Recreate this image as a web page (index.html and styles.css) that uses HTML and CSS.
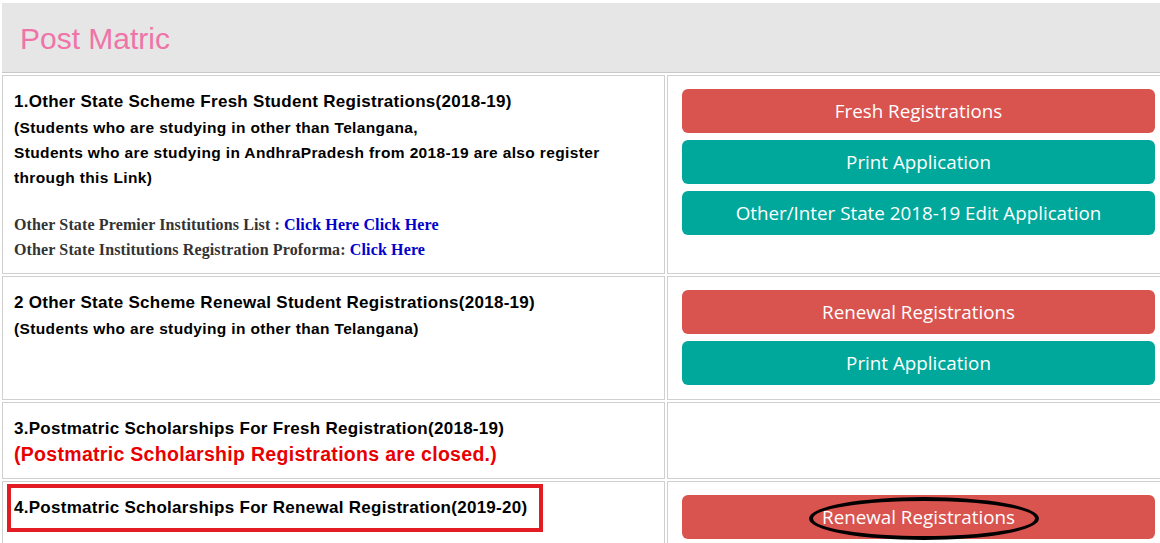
FILE: index.html
```html
<!DOCTYPE html>
<html lang="en">
<head>
  <meta charset="UTF-8">
  <title>Post Matric</title>
  <link rel="stylesheet" href="styles.css">
</head>
<body>

  <div class="panel">
    <!-- heading -->
    <div class="panel-head">
      <h3>Post Matric</h3>
    </div>

    <!-- 1. fresh, other state -->
    <div class="row">
      <div class="cell info">
        <div class="title">1.Other State Scheme Fresh Student Registrations(2018-19)</div>
        <div class="sub">(Students who are studying in other than Telangana,</div>
        <div class="sub">Students who are studying in AndhraPradesh from 2018-19 are also register through this Link)</div>
        <div class="links">
          <div>Other State Premier Institutions List : <a href="#">Click Here</a> <a href="#">Click Here</a></div>
          <div>Other State Institutions Registration Proforma: <a href="#">Click Here</a></div>
        </div>
      </div>
      <div class="cell actions">
        <a class="btn btn-red" href="#">Fresh Registrations</a>
        <a class="btn btn-teal" href="#">Print Application</a>
        <a class="btn btn-teal" href="#">Other/Inter State 2018-19 Edit Application</a>
      </div>
    </div>

    <!-- 2. renewal, other state -->
    <div class="row">
      <div class="cell info">
        <div class="title">2 Other State Scheme Renewal Student Registrations(2018-19)</div>
        <div class="sub">(Students who are studying in other than Telangana)</div>
      </div>
      <div class="cell actions">
        <a class="btn btn-red" href="#">Renewal Registrations</a>
        <a class="btn btn-teal" href="#">Print Application</a>
      </div>
    </div>

    <!-- 3. fresh, closed -->
    <div class="row">
      <div class="cell info">
        <div class="title">3.Postmatric Scholarships For Fresh Registration(2018-19)</div>
        <div class="closed">(Postmatric Scholarship Registrations are closed.)</div>
      </div>
      <div class="cell actions"></div>
    </div>

    <!-- 4. renewal -->
    <div class="row">
      <div class="cell info boxed">
        <div class="mark">
          <div class="title">4.Postmatric Scholarships For Renewal Registration(2019-20)</div>
        </div>
      </div>
      <div class="cell actions">
        <a class="btn btn-red" href="#">Renewal Registrations
          <span class="ring"></span>
        </a>
      </div>
    </div>
  </div>

</body>
</html>
```

FILE: styles.css
```css
body {
  margin: 0;
  overflow: hidden;
  background: #fff;
  font-family: 'Liberation Sans', Arial, sans-serif;
  color: #000;
}

.panel {
  width: 1168px;
  padding: 3px 2px 2px;
  display: flex;
  flex-direction: column;
  gap: 2px;
}

.panel-head {
  background: #e6e6e6;
  border-bottom: 1px solid #c8c8c8;
  height: 69px;
  display: flex;
  align-items: center;
  padding-left: 18px;
}

.panel-head h3 {
  margin: 2px 0 0;
  font-weight: normal;
  font-size: 30px;
  color: #ef74a8;
}

.row {
  display: grid;
  grid-template-columns: 663px 1fr;
  gap: 2px;
}

.cell {
  border: 1px solid #d0d0d0;
}

.info {
  padding: 13px 11px 11px 11px;
}

.title {
  font-weight: bold;
  font-size: 17px;
  letter-spacing: 0.28px;
  line-height: 26px;
}

.sub {
  font-weight: bold;
  font-size: 15.5px;
  letter-spacing: 0.36px;
  line-height: 25px;
}

.closed {
  font-weight: bold;
  font-size: 19.5px;
  letter-spacing: 0.3px;
  line-height: 25px;
  color: #e80000;
}

.links {
  margin-top: 22px;
  font-family: 'Liberation Serif', 'Times New Roman', serif;
  font-weight: bold;
  font-size: 16px;
  letter-spacing: 0.13px;
  line-height: 25px;
  color: #333;
}

.links a {
  color: #0000cc;
  text-decoration: none;
}

.actions {
  padding: 13px 14px 14px;
  display: flex;
  flex-direction: column;
  gap: 7px;
}

.btn {
  position: relative;
  display: block;
  height: 44px;
  line-height: 44px;
  text-align: center;
  font-family: 'Open Sans', sans-serif;
  font-size: 18.8px;
  color: #fff;
  text-decoration: none;
  border-radius: 6px;
}

.btn-red {
  background: #d9534f;
}

.btn-teal {
  background: #00a89c;
}

.boxed {
  padding: 2px 4px;
}

.mark {
  display: inline-block;
  border: 4px solid #e31b23;
  padding: 7px 12px 7px 3px;
}

/* hand-drawn annotation around the last button */
.ring {
  position: absolute;
  left: 127px;
  top: 2px;
  width: 222px;
  height: 35px;
  border: 4px solid #000;
  border-radius: 50%;
}
```
